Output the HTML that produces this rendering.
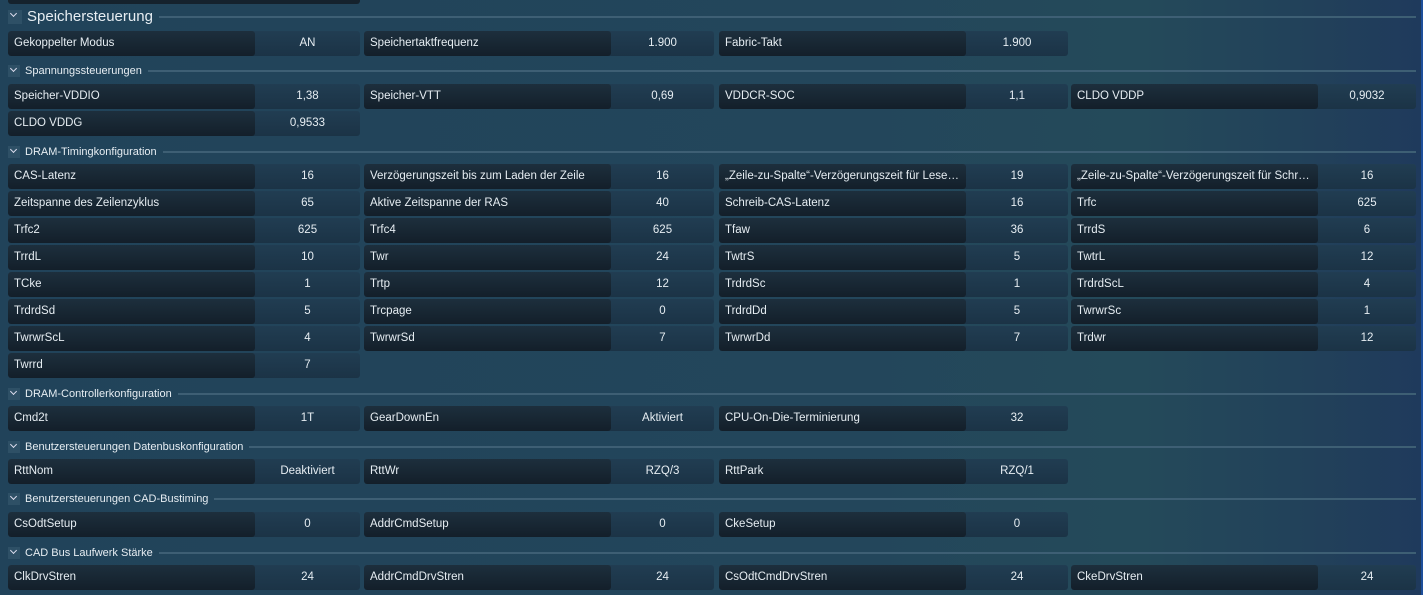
<!DOCTYPE html><html><head><meta charset="utf-8"><style>
body{margin:0;width:1423px;height:595px;overflow:hidden;position:relative;font-family:"Liberation Sans",sans-serif;color:#e6edf2;
background:linear-gradient(90deg,#21435a 0%,#23465b 60%,#244a5a 80%,#22415a 92%,#1f3a5c 100%);}
.c{position:absolute;height:25px;border-radius:3px;overflow:hidden;background:linear-gradient(#213d52,#1b3346);font-size:11.5px;}
.c .l{position:absolute;left:0;top:0;bottom:0;width:247px;border-radius:3px;background:linear-gradient(#1d2f3d,#131f2a);padding:0 6px;line-height:25px;box-sizing:border-box;white-space:nowrap;overflow:hidden;text-overflow:ellipsis}
.c .v{position:absolute;left:247px;right:0;top:0;bottom:0;text-align:center;line-height:25px}
.h{position:absolute;left:8px;font-size:11px;display:flex;align-items:center;right:7px}
.h .a{width:12px;height:12px;background:#2e5066;margin-right:5px;position:relative}
.h .a:after{content:"";position:absolute;left:3px;top:1px;width:4px;height:4px;border-right:1px solid #dde;border-bottom:1px solid #dde;transform:rotate(45deg)}
.h .ln{flex:1;height:2px;background:#3e5f74;margin-left:6px}
</style></head><body>
<div style="position:absolute;left:8px;top:-20px;width:352px;height:24px;background:#15222d;border-radius:3px"></div>
<div style="position:absolute;right:0;top:0;width:2px;height:595px;background:#1d4e9a"></div>
<div class="h" style="top:8px;font-size:15px"><div class="a" style="width:14px;height:14px"></div>Speichersteuerung<div class="ln"></div></div>
<div class="c" style="left:8px;top:31px;width:352px"><div class="l">Gekoppelter Modus</div><div class="v">AN</div></div>
<div class="c" style="left:364px;top:31px;width:350px"><div class="l">Speichertaktfrequenz</div><div class="v">1.900</div></div>
<div class="c" style="left:719px;top:31px;width:349px"><div class="l">Fabric-Takt</div><div class="v">1.900</div></div>

<div class="h" style="top:65px"><div class="a"></div>Spannungssteuerungen<div class="ln"></div></div>
<div class="c" style="left:8px;top:84px;width:352px"><div class="l">Speicher-VDDIO</div><div class="v">1,38</div></div>
<div class="c" style="left:364px;top:84px;width:350px"><div class="l">Speicher-VTT</div><div class="v">0,69</div></div>
<div class="c" style="left:719px;top:84px;width:349px"><div class="l">VDDCR-SOC</div><div class="v">1,1</div></div>
<div class="c" style="left:1071px;top:84px;width:345px"><div class="l">CLDO VDDP</div><div class="v">0,9032</div></div>
<div class="c" style="left:8px;top:111px;width:352px"><div class="l">CLDO VDDG</div><div class="v">0,9533</div></div>

<div class="h" style="top:146px"><div class="a"></div>DRAM-Timingkonfiguration<div class="ln"></div></div>
<div class="c" style="left:8px;top:164px;width:352px"><div class="l">CAS-Latenz</div><div class="v">16</div></div>
<div class="c" style="left:364px;top:164px;width:350px"><div class="l">Verzögerungszeit bis zum Laden der Zeile</div><div class="v">16</div></div>
<div class="c" style="left:719px;top:164px;width:349px"><div class="l">„Zeile-zu-Spalte“-Verzögerungszeit für Lesevor...</div><div class="v">19</div></div>
<div class="c" style="left:1071px;top:164px;width:345px"><div class="l">„Zeile-zu-Spalte“-Verzögerungszeit für Schreibv...</div><div class="v">16</div></div>
<div class="c" style="left:8px;top:191px;width:352px"><div class="l">Zeitspanne des Zeilenzyklus</div><div class="v">65</div></div>
<div class="c" style="left:364px;top:191px;width:350px"><div class="l">Aktive Zeitspanne der RAS</div><div class="v">40</div></div>
<div class="c" style="left:719px;top:191px;width:349px"><div class="l">Schreib-CAS-Latenz</div><div class="v">16</div></div>
<div class="c" style="left:1071px;top:191px;width:345px"><div class="l">Trfc</div><div class="v">625</div></div>
<div class="c" style="left:8px;top:218px;width:352px"><div class="l">Trfc2</div><div class="v">625</div></div>
<div class="c" style="left:364px;top:218px;width:350px"><div class="l">Trfc4</div><div class="v">625</div></div>
<div class="c" style="left:719px;top:218px;width:349px"><div class="l">Tfaw</div><div class="v">36</div></div>
<div class="c" style="left:1071px;top:218px;width:345px"><div class="l">TrrdS</div><div class="v">6</div></div>
<div class="c" style="left:8px;top:245px;width:352px"><div class="l">TrrdL</div><div class="v">10</div></div>
<div class="c" style="left:364px;top:245px;width:350px"><div class="l">Twr</div><div class="v">24</div></div>
<div class="c" style="left:719px;top:245px;width:349px"><div class="l">TwtrS</div><div class="v">5</div></div>
<div class="c" style="left:1071px;top:245px;width:345px"><div class="l">TwtrL</div><div class="v">12</div></div>
<div class="c" style="left:8px;top:272px;width:352px"><div class="l">TCke</div><div class="v">1</div></div>
<div class="c" style="left:364px;top:272px;width:350px"><div class="l">Trtp</div><div class="v">12</div></div>
<div class="c" style="left:719px;top:272px;width:349px"><div class="l">TrdrdSc</div><div class="v">1</div></div>
<div class="c" style="left:1071px;top:272px;width:345px"><div class="l">TrdrdScL</div><div class="v">4</div></div>
<div class="c" style="left:8px;top:299px;width:352px"><div class="l">TrdrdSd</div><div class="v">5</div></div>
<div class="c" style="left:364px;top:299px;width:350px"><div class="l">Trcpage</div><div class="v">0</div></div>
<div class="c" style="left:719px;top:299px;width:349px"><div class="l">TrdrdDd</div><div class="v">5</div></div>
<div class="c" style="left:1071px;top:299px;width:345px"><div class="l">TwrwrSc</div><div class="v">1</div></div>
<div class="c" style="left:8px;top:326px;width:352px"><div class="l">TwrwrScL</div><div class="v">4</div></div>
<div class="c" style="left:364px;top:326px;width:350px"><div class="l">TwrwrSd</div><div class="v">7</div></div>
<div class="c" style="left:719px;top:326px;width:349px"><div class="l">TwrwrDd</div><div class="v">7</div></div>
<div class="c" style="left:1071px;top:326px;width:345px"><div class="l">Trdwr</div><div class="v">12</div></div>
<div class="c" style="left:8px;top:353px;width:352px"><div class="l">Twrrd</div><div class="v">7</div></div>

<div class="h" style="top:388px"><div class="a"></div>DRAM-Controllerkonfiguration<div class="ln"></div></div>
<div class="c" style="left:8px;top:406px;width:352px"><div class="l">Cmd2t</div><div class="v">1T</div></div>
<div class="c" style="left:364px;top:406px;width:350px"><div class="l">GearDownEn</div><div class="v">Aktiviert</div></div>
<div class="c" style="left:719px;top:406px;width:349px"><div class="l">CPU-On-Die-Terminierung</div><div class="v">32</div></div>

<div class="h" style="top:441px"><div class="a"></div>Benutzersteuerungen Datenbuskonfiguration<div class="ln"></div></div>
<div class="c" style="left:8px;top:459px;width:352px"><div class="l">RttNom</div><div class="v">Deaktiviert</div></div>
<div class="c" style="left:364px;top:459px;width:350px"><div class="l">RttWr</div><div class="v">RZQ/3</div></div>
<div class="c" style="left:719px;top:459px;width:349px"><div class="l">RttPark</div><div class="v">RZQ/1</div></div>

<div class="h" style="top:493px"><div class="a"></div>Benutzersteuerungen CAD-Bustiming<div class="ln"></div></div>
<div class="c" style="left:8px;top:512px;width:352px"><div class="l">CsOdtSetup</div><div class="v">0</div></div>
<div class="c" style="left:364px;top:512px;width:350px"><div class="l">AddrCmdSetup</div><div class="v">0</div></div>
<div class="c" style="left:719px;top:512px;width:349px"><div class="l">CkeSetup</div><div class="v">0</div></div>

<div class="h" style="top:547px"><div class="a"></div>CAD Bus Laufwerk Stärke<div class="ln"></div></div>
<div class="c" style="left:8px;top:565px;width:352px"><div class="l">ClkDrvStren</div><div class="v">24</div></div>
<div class="c" style="left:364px;top:565px;width:350px"><div class="l">AddrCmdDrvStren</div><div class="v">24</div></div>
<div class="c" style="left:719px;top:565px;width:349px"><div class="l">CsOdtCmdDrvStren</div><div class="v">24</div></div>
<div class="c" style="left:1071px;top:565px;width:345px"><div class="l">CkeDrvStren</div><div class="v">24</div></div>
</body></html>
